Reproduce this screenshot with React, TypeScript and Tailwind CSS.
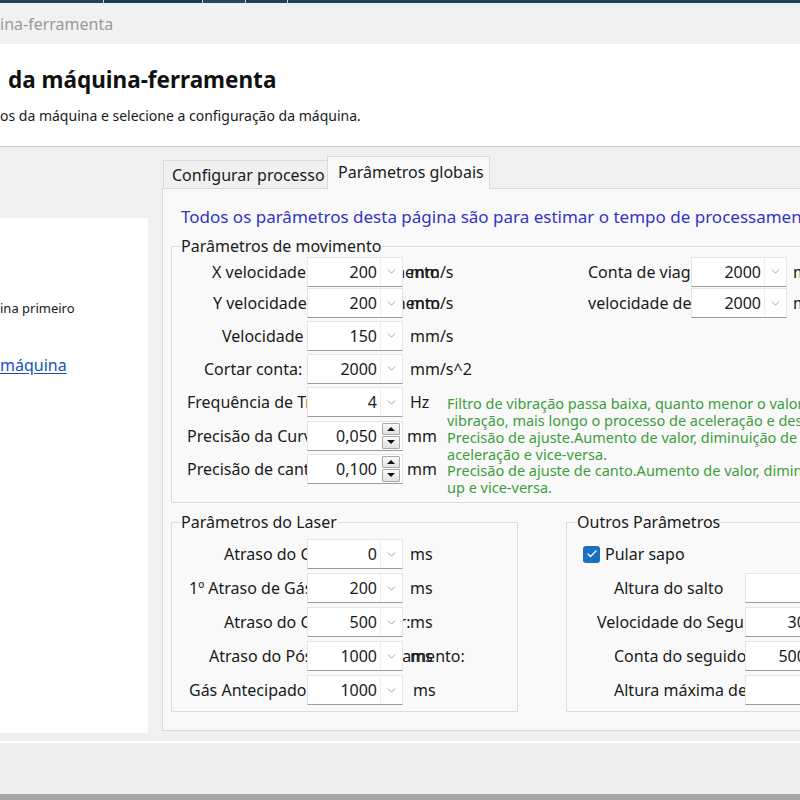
import React from 'react';
import { ChevronDown, Check } from 'lucide-react';

type Row = {
  label: string;
  pl: string;
  h: string;
  value: string;
  spin?: boolean;
  unit?: string;
  unitW?: string;
  unitPl?: string;
  note?: [string, string];
  right?: { label: string; value: string; unit: string };
};

const moveRows: Row[] = [
  { label: 'X velocidade de deslocamento', pl: 'pl-[25px]', h: 'h-[31px]', value: '200', unit: 'mm/s', unitW: 'w-[185px]', unitPl: 'pl-[7px]', right: { label: 'Conta de viagem', value: '2000', unit: 'mm/s^2' } },
  { label: 'Y velocidade de deslocamento', pl: 'pl-[26px]', h: 'h-[32px]', value: '200', unit: 'mm/s', unitW: 'w-[185px]', unitPl: 'pl-[7px]', right: { label: 'velocidade de viagem', value: '2000', unit: 'mm/s' } },
  { label: 'Velocidade', pl: 'pl-[35px]', h: 'h-[33px]', value: '150', unit: 'mm/s', unitW: 'w-[185px]', unitPl: 'pl-[7px]' },
  { label: 'Cortar conta:', pl: 'pl-[17px]', h: 'h-[33px]', value: '2000', unit: 'mm/s^2', unitW: 'w-[185px]', unitPl: 'pl-[7px]' },
  {
    label: 'Frequência de Trepidação', pl: 'pl-0', h: 'h-[34px]', value: '4', unit: 'Hz', unitW: 'w-[44px]', unitPl: 'pl-[7px]',
    note: ['Filtro de vibração passa baixa, quanto menor o valor da frequência,', 'vibração, mais longo o processo de aceleração e desaceleração.'],
  },
  {
    label: 'Precisão da Curva', pl: 'pl-0', h: 'h-[33px]', value: '0,050', spin: true, unit: 'mm', unitW: 'w-[44px]', unitPl: 'pl-[4px]',
    note: ['Precisão de ajuste.Aumento de valor, diminuição de precisão, mais rápido o processo de', 'aceleração e vice-versa.'],
  },
  {
    label: 'Precisão de canto', pl: 'pl-0', h: 'h-[33px]', value: '0,100', spin: true, unit: 'mm', unitW: 'w-[44px]', unitPl: 'pl-[4px]',
    note: ['Precisão de ajuste de canto.Aumento de valor, diminuição de precisão, speed', 'up e vice-versa.'],
  },
];

const laserRows = [
  { label: 'Atraso do Gás', pl: 'pl-[37px]', value: '0', unit: 'ms', unitPl: 'pl-[7px]' },
  { label: '1º Atraso de Gás', pl: 'pl-[2px]', value: '200', unit: 'ms', unitPl: 'pl-[7px]' },
  { label: 'Atraso do Gás ao Fechar:', pl: 'pl-[37px]', value: '500', unit: 'ms', unitPl: 'pl-[7px]' },
  { label: 'Atraso do Pós de Posicionamento:', pl: 'pl-[22px]', value: '1000', unit: 'ms', unitPl: 'pl-[7px]' },
  { label: 'Gás Antecipado', pl: 'pl-[2px]', value: '1000', unit: 'ms', unitPl: 'pl-[10px]' },
];

const otherRows = [
  { label: 'Altura do salto', pl: 'pl-[47px]', value: '5' },
  { label: 'Velocidade do Seguidor', pl: 'pl-[30px]', value: '300' },
  { label: 'Conta do seguidor', pl: 'pl-[47px]', value: '5000' },
  { label: 'Altura máxima de salto', pl: 'pl-[47px]', value: '8' },
];

function DropInput({ value }: { value: string }) {
  return (
    <div className="relative z-10 flex h-[30px] w-[96px] shrink-0 border border-[#e6e6e6] border-b-[#9c9c9c] bg-white">
      <span className="flex flex-1 items-center justify-end pr-[3px] text-[16px] text-[#1a1a1a]">{value}</span>
      <span className="flex w-[22px] items-center justify-center border-l border-[#eeeeee] text-[#858585]">
        <ChevronDown size={13} strokeWidth={1.4} />
      </span>
    </div>
  );
}

function SpinInput({ value }: { value: string }) {
  return (
    <div className="relative z-10 flex h-[30px] w-[96px] shrink-0 items-center border border-[#e6e6e6] border-b-[#9c9c9c] bg-white">
      <span className="flex-1 pr-[5px] text-right text-[16px] text-[#1a1a1a]">{value}</span>
      <div className="mr-[2px] flex h-[26px] w-[18px] flex-col gap-px">
        <span className="flex flex-1 items-center justify-center rounded-[1px] border border-[#a8a8a8] bg-gradient-to-b from-[#fbfbfb] to-[#e1e1e1]">
          <span className="h-0 w-0 border-x-[4px] border-b-[4px] border-x-transparent border-b-[#111]" />
        </span>
        <span className="flex flex-1 items-center justify-center rounded-[1px] border border-[#a8a8a8] bg-gradient-to-b from-[#fbfbfb] to-[#e1e1e1]">
          <span className="h-0 w-0 border-x-[4px] border-t-[4px] border-x-transparent border-t-[#111]" />
        </span>
      </div>
    </div>
  );
}

function Label({ text, pl, w }: { text: string; pl: string; w: string }) {
  return <div className={`${w} ${pl} shrink-0 whitespace-nowrap text-[16px] text-[#1a1a1a]`}>{text}</div>;
}

export default function App() {
  return (
    <div className="flex h-[800px] w-[800px] flex-col overflow-hidden bg-[#f0f0f0] font-['Noto_Sans',sans-serif] text-[#1a1a1a]">
      {/* strip of the window behind */}
      <div className="flex h-[3px] shrink-0 gap-px bg-[#c9d6e3]">
        <div className="w-[103px] bg-[#22405f]" />
        <div className="w-[98px] bg-[#1d3a58]" />
        <div className="w-[42px] bg-[#274766]" />
        <div className="w-[41px] bg-[#1f3d5c]" />
        <div className="flex-1 bg-[#203f5e]" />
      </div>

      <div className="flex h-[41px] shrink-0 items-center bg-[#f1f1f1] text-[16px] text-[#9a9a9a]">ina-ferramenta</div>

      <header className="h-[102px] shrink-0 bg-white pt-[21px]">
        <h1 className="pl-[8px] text-[22.5px] font-bold leading-[30px] text-[#111]">da máquina-ferramenta</h1>
        <p className="mt-[12px] text-[14px] leading-[18px] text-[#1a1a1a]">os da máquina e selecione a configuração da máquina.</p>
      </header>
      <div className="h-px shrink-0 bg-[#bccfdf]" />

      <main className="flex h-[594px] shrink-0">
        <aside className="mt-[71px] h-[515px] w-[148px] shrink-0 bg-white">
          <p className="mt-[81px] text-[13px] leading-[18px]">ina primeiro</p>
          <a className="mt-[37px] block text-[16px] leading-[22px] text-[#1550c4] underline underline-offset-2">máquina</a>
        </aside>

        <section className="ml-[14px] flex flex-col pt-[9px]">
          <div className="flex h-[32px] items-end">
            <div className="ml-px flex h-[28px] w-[164px] items-center border border-r-0 border-b-0 border-[#d9d9d9] bg-[#f0f0f0] pl-[8px] text-[16px]">
              Configurar processo
            </div>
            <div className="relative z-10 -mb-px flex h-[33px] w-[163px] items-center border border-b-0 border-[#d9d9d9] bg-[#f9f9f9] pb-[2px] pl-[10px] text-[16px]">
              Parâmetros globais
            </div>
          </div>

          <div className="h-[543px] w-[660px] border border-[#d9d9d9] bg-[#f9f9f9] pl-[8px] pt-[18px]">
            <p className="whitespace-nowrap pl-[10px] text-[17px] leading-[20px] text-[#3333c6]">
              Todos os parâmetros desta página são para estimar o tempo de processamento.
            </p>

            <fieldset className="mt-[9px] h-[267px] w-[700px] border border-[#dcdcdc]">
              <legend className="ml-[9px] text-[16px] leading-[20px]">Parâmetros de movimento</legend>
              {moveRows.map((r) => (
                <div key={r.label} className={`flex ${r.h} items-center pl-[15px]`}>
                  <Label text={r.label} pl={r.pl} w="w-[120px]" />
                  {r.spin ? <SpinInput value={r.value} /> : <DropInput value={r.value} />}
                  <div className={`${r.unitW} ${r.unitPl} shrink-0 whitespace-nowrap text-[16px]`}>{r.unit}</div>
                  {r.right && (
                    <>
                      <Label text={r.right.label} pl="pl-0" w="w-[103px]" />
                      <DropInput value={r.right.value} />
                      <div className="shrink-0 pl-[6px] text-[16px]">{r.right.unit}</div>
                    </>
                  )}
                  {r.note && (
                    <div className="mt-[10px] self-start whitespace-nowrap text-[14.5px] leading-[17px] text-[#3c9e3c]">
                      {r.note[0]}
                      <br />
                      {r.note[1]}
                    </div>
                  )}
                </div>
              ))}
            </fieldset>

            <div className="mt-[9px] flex">
              <fieldset className="h-[200px] w-[347px] shrink-0 border border-[#dcdcdc]">
                <legend className="ml-[9px] text-[16px] leading-[20px]">Parâmetros do Laser</legend>
                <div className="pt-[5px]">
                  {laserRows.map((r) => (
                    <div key={r.label} className="flex h-[34px] items-center pl-[15px]">
                      <Label text={r.label} pl={r.pl} w="w-[120px]" />
                      <DropInput value={r.value} />
                      <div className={`${r.unitPl} whitespace-nowrap text-[16px]`}>{r.unit}</div>
                    </div>
                  ))}
                </div>
              </fieldset>

              <fieldset className="ml-[48px] h-[200px] w-[300px] shrink-0 border border-[#dcdcdc]">
                <legend className="ml-[10px] text-[16px] leading-[20px]">Outros Parâmetros</legend>
                <div className="pt-[5px]">
                  <div className="flex h-[34px] items-center pl-[16px]">
                    <span className="flex h-[17px] w-[17px] items-center justify-center rounded-[3px] bg-[#1d6fc2] text-white">
                      <Check size={12} strokeWidth={2.5} />
                    </span>
                    <span className="ml-[5px] text-[16px]">Pular sapo</span>
                  </div>
                  {otherRows.map((r) => (
                    <div key={r.label} className="flex h-[34px] items-center">
                      <Label text={r.label} pl={r.pl} w="w-[178px]" />
                      <DropInput value={r.value} />
                    </div>
                  ))}
                </div>
              </fieldset>
            </div>
          </div>
        </section>
      </main>

      <div className="h-[2px] shrink-0 bg-white" />
      <footer className="h-[51px] shrink-0 bg-[#efefef]" />
      <div className="flex-1 bg-[#a6a6a6]" />
    </div>
  );
}
